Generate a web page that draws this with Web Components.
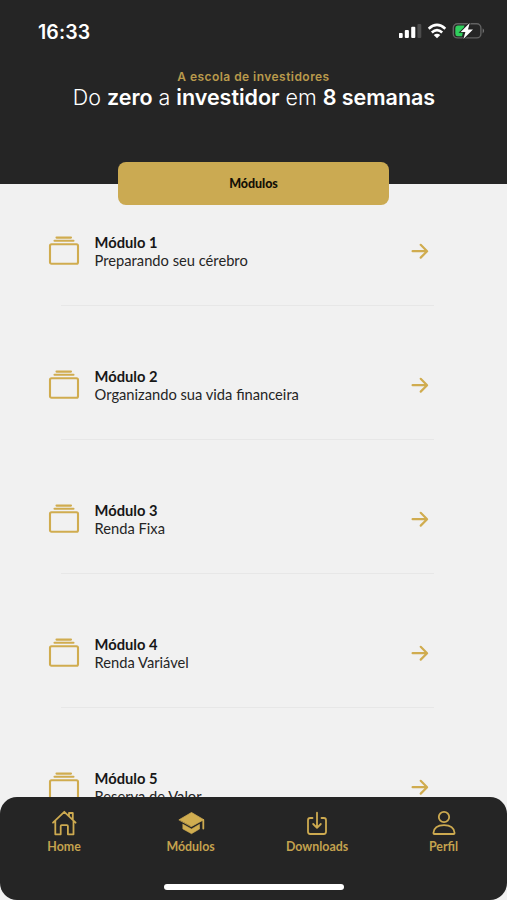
<!DOCTYPE html>
<html lang="pt-BR">
<head>
<meta charset="utf-8">
<title>Módulos</title>
<style>
html,body{margin:0;height:100%;background:#f1f1f1;overflow:hidden}
</style>
</head>
<body>
<school-app></school-app>
<script>
const define = (name, html) => customElements.define(name, class extends HTMLElement {
  constructor() {
    super();
    const t = document.createElement('template');
    t.innerHTML = html;
    this.attachShadow({ mode: 'open' }).append(t.content.cloneNode(true));
  }
});

define('status-bar', `<style>
:host{display:flex;justify-content:space-between;align-items:center;height:24px;padding:20px 20px 0 38px;color:#fff}
b{font:600 19.5px/24px Inter,sans-serif;letter-spacing:.1px}
svg{display:block}
</style><b>16:33</b>
<svg width="88" height="20" viewBox="400 22.5 88 20" fill="#fff">
<rect x="399.8" y="33.5" width="3.9" height="5" rx="1"/><rect x="405.8" y="30.5" width="4.1" height="8" rx="1"/><rect x="412.2" y="27.3" width="4.1" height="11.2" rx="1"/><rect x="418.4" y="24.5" width="3.9" height="14" rx="1" fill="#4c4c4c"/>
<g fill="none" stroke="#fff" stroke-width="2.6"><path d="M429.7 29.2Q438 21.7 446.3 29.2"/><path d="M432.8 33Q438 28.4 443.2 33"/></g><path d="M434.7 35.5Q438 32.8 441.3 35.5L438 38.7Z"/>
<rect x="454.3" y="24.2" width="27.6" height="14.2" rx="4.2" fill="none" stroke="#626262" stroke-width="1.4"/><path d="M483.7 28.8Q486.4 31.3 483.7 33.9Z" fill="#777"/>
<path d="M458.7 26H465.5L463 36.8H458.7Q456.3 36.8 456.3 34.3V28.5Q456.3 26 458.7 26Z" fill="#30cf5d"/>
<path d="M470.7 23.4L461.7 32.4H466.4L464.4 39.5L474 29.9H469Z" stroke="#252525" stroke-width="1.8" paint-order="stroke"/>
</svg>`);

define('app-header', `<style>
:host{display:flex;flex-direction:column;box-sizing:border-box;height:184px;background:#252525;text-align:center;font-family:Inter,sans-serif}
status-bar svg{overflow:visible}
.eyebrow{margin:25px 0 0 0;font-size:12px;line-height:15px;font-weight:600;letter-spacing:.45px;color:#b99a4c}
h1{margin:0 0 0 1px;font-size:21.5px;line-height:26px;font-weight:300;letter-spacing:-.03px;color:#fff;white-space:nowrap}
h1 ::slotted(b){font-weight:600}
</style><status-bar></status-bar><div class="eyebrow"><slot name="eyebrow"></slot></div><h1><slot></slot></h1>`);

define('section-button', `<style>
:host{display:block;width:271px;height:43px;margin:-22px auto 0 118px}
button{display:block;width:100%;height:100%;border:0;padding:0;border-radius:8px;background:#cbaa52;color:#141006;font:900 12.5px/43px Lato,sans-serif;letter-spacing:-.05px}
</style><button><slot></slot></button>`);

define('module-row', `<style>
:host{display:grid;grid-template-columns:32px 1fr 18px;grid-template-rows:36px 36px 62px;column-gap:14.6px;height:134px;font-family:Lato,sans-serif;font-size:14.7px;line-height:18px;color:#252525}
b{display:block;font-weight:700;color:#171717}
svg{display:block;fill:none;stroke:#d0ac4f}
.rule{grid-column:1/4;grid-row:3;height:1px;margin:0 -5px 0 13px;background:#e7e7e7}
</style>
<svg width="32" height="36" viewBox="0 -2 32 36" stroke-width="2.1" stroke-linecap="round"><path d="M8.5 2.6H23M6.5 5.8H25.5"/><rect x="2" y="9.2" width="28" height="19.6" rx="1.5"/></svg>
<div><b><slot name="title"></slot></b><slot></slot></div>
<svg width="18" height="36" viewBox="0 -9 18 36" stroke-width="2.2" stroke-linecap="round" stroke-linejoin="round"><path d="M1.6 9.2H15.8M9.7 2.8L16.1 9.2L9.7 15.6"/></svg>
<div class="rule"></div>`);

define('module-list', `<style>
:host{display:block;padding:28px 78px 0 48px}
</style><slot></slot>`);

define('nav-item', `<style>
:host{display:flex;flex-direction:column;align-items:center;width:126.5px;font:700 12.4px/16px Lato,sans-serif;color:#c4a24e}
::slotted(svg){display:block;width:28px;height:28px;margin-bottom:2px;fill:none;stroke:#cdaa50;stroke-width:1.8;stroke-linecap:round;stroke-linejoin:round}
</style><slot name="icon"></slot><slot></slot>`);

define('tab-bar', `<style>
:host{display:flex;flex-direction:column;box-sizing:border-box;height:103px;padding-top:12px;background:#252525;border-radius:17px}
nav{display:flex;padding-left:.8px}
i{display:block;width:180px;height:6px;margin:29px auto 0 164px;border-radius:3px;background:#fff}
</style><nav><slot></slot></nav><i></i>`);

define('school-app', `<style>
:host{display:grid;grid-template-rows:184px 613px 103px;width:507px;height:900px;background:#f1f1f1;overflow:hidden}
main{min-height:0}
tab-bar{z-index:1}
</style>
<app-header><span slot="eyebrow">A escola de investidores</span>Do <b>zero</b> a <b>investidor</b> em <b>8 semanas</b></app-header>
<main><section-button>Módulos</section-button>
<module-list>
<module-row><span slot="title">Módulo 1</span>Preparando seu cérebro</module-row>
<module-row><span slot="title">Módulo 2</span>Organizando sua vida financeira</module-row>
<module-row><span slot="title">Módulo 3</span>Renda Fixa</module-row>
<module-row><span slot="title">Módulo 4</span>Renda Variável</module-row>
<module-row><span slot="title">Módulo 5</span>Reserva de Valor</module-row>
</module-list></main>
<tab-bar>
<nav-item><svg slot="icon" viewBox="0 0 28 28"><path d="M3 13.7L14.3 2.8L25.6 13.7M5.3 11.7V25.3H10.7V17.2Q10.7 16.2 11.7 16.2H16.9Q17.9 16.2 17.9 17.2V25.3H23.5V11.7M19 7V4H22.8V10.5"/></svg>Home</nav-item>
<nav-item><svg slot="icon" viewBox="0 0 28 28"><path d="M2.2 10.7L14.5 3.5L26.8 10.7L14.5 17.5Z" style="fill:#d0ad50;stroke-width:.8"/><path d="M6 15.3L14.5 20L22.5 15.3V20L14.5 24.7L6 20Z" style="fill:#d0ad50;stroke-width:.6"/><path d="M26.3 11V19.5"/></svg>Módulos</nav-item>
<nav-item><svg slot="icon" viewBox="0 0 28 28"><path d="M9.5 9H7.2Q5 9 5 11.2V22.8Q5 25 7.2 25H20.8Q23 25 23 22.8V11.2Q23 9 20.8 9H18.5M14 3.7V18.5M10.2 15L14 18.8L17.8 15"/></svg>Downloads</nav-item>
<nav-item><svg slot="icon" viewBox="0 0 28 28"><circle cx="14" cy="8" r="5.2"/><path d="M4.4 25Q3.4 25 3.4 24Q4.2 16.2 14 16.2Q23.8 16.2 24.6 24Q24.6 25 23.6 25Z"/></svg>Perfil</nav-item>
</tab-bar>`);
</script>
</body>
</html>
